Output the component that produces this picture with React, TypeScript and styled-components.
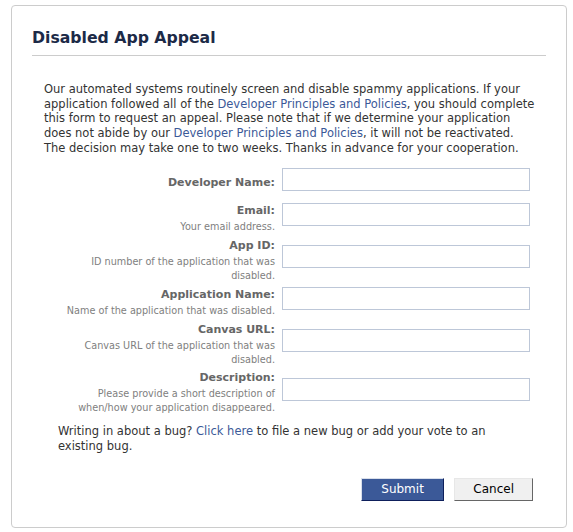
import React from "react";
import styled, { createGlobalStyle } from "styled-components";

const Global = createGlobalStyle`
  html, body { margin: 0; padding: 0; background: #fff; }
  body { font-family: "DejaVu Sans", Verdana, sans-serif; font-size: 11px; color: #333; }
  * { box-sizing: border-box; }
`;

const Card = styled.div`
  margin: 5px 6px 5px 11px;
  border: 1px solid #ccc;
  border-radius: 4px;
  padding: 22px 20px 26px;
  background: #fff;
`;

const Title = styled.h2`
  margin: 0;
  padding: 0 0 7px;
  font-size: 15.7px;
  line-height: 20px;
  font-weight: bold;
  color: #1c2a47;
  border-bottom: 1px solid #ccc;
`;

const Intro = styled.p`
  margin: 26px 0 0;
  padding: 0 10px 0 12px;
  font-size: 11.5px;
  line-height: 14.74px;
  color: #333;
`;

const Link = styled.a`
  color: #3b5998;
  text-decoration: none;
  cursor: pointer;
`;

const Form = styled.div`
  margin-top: 12px;
  padding-left: 26px;
  display: grid;
  grid-template-columns: 217px 248px;
  column-gap: 7px;
  row-gap: 4.5px;
`;

const LabelCell = styled.div`
  align-self: center;
  text-align: right;
`;

const Label = styled.label`
  display: block;
  font-weight: bold;
  font-size: 11px;
  line-height: 14px;
  color: #666;
`;

const Sub = styled.div`
  margin-top: 2px;
  font-size: 9.7px;
  line-height: 14px;
  color: #808080;
`;

const Input = styled.input`
  align-self: center;
  width: 248px;
  height: 23px;
  margin: 0 0 8px;
  border: 1px solid #bdc7d8;
  padding: 3px;
  font-family: inherit;
  font-size: 11px;
  outline: none;
`;

const Bug = styled.p`
  margin: 9px 0 0;
  padding: 0 40px 0 26px;
  font-size: 11.5px;
  line-height: 14.74px;
  color: #333;
`;

const Actions = styled.div`
  margin-top: 24px;
  padding-right: 13px;
  display: flex;
  justify-content: flex-end;
  gap: 10px;
`;

const Button = styled.button<{ $primary?: boolean }>`
  height: 23px;
  padding: 0 ${(p) => (p.$primary ? "19.5px" : "18px")};
  font-family: "DejaVu Sans", Verdana, sans-serif;
  font-size: 12px;
  line-height: 14px;
  border-style: solid;
  border-width: 1px;
  background: ${(p) => (p.$primary ? "#3b5998" : "#f0f0f0")};
  color: ${(p) => (p.$primary ? "#fff" : "#000")};
  border-color: ${(p) =>
    p.$primary ? "#d9dfea #0e1f5b #0e1f5b #d9dfea" : "#e7e7e7 #666 #666 #e7e7e7"};
  cursor: pointer;
`;

type Field = { label: string; sub?: string };

const fields: Field[] = [
  { label: "Developer Name:" },
  { label: "Email:", sub: "Your email address." },
  { label: "App ID:", sub: "ID number of the application that was disabled." },
  { label: "Application Name:", sub: "Name of the application that was disabled." },
  { label: "Canvas URL:", sub: "Canvas URL of the application that was disabled." },
  { label: "Description:", sub: "Please provide a short description of when/how your application disappeared." },
];

export default function App() {
  return (
    <>
      <Global />
      <Card>
        <Title>Disabled App Appeal</Title>
        <Intro>
          Our automated systems routinely screen and disable spammy applications. If your
          application followed all of the <Link>Developer Principles and Policies</Link>, you
          should complete this form to request an appeal. Please note that if we determine
          your application does not abide by our <Link>Developer Principles and Policies</Link>,
          it will not be reactivated. The decision may take one to two weeks. Thanks in advance
          for your cooperation.
        </Intro>
        <Form>
          {fields.map((f) => (
            <React.Fragment key={f.label}>
              <LabelCell>
                <Label>{f.label}</Label>
                {f.sub && <Sub>{f.sub}</Sub>}
              </LabelCell>
              <Input type="text" />
            </React.Fragment>
          ))}
        </Form>
        <Bug>
          Writing in about a bug? <Link>Click here</Link> to file a new bug or add your vote to
          an existing bug.
        </Bug>
        <Actions>
          <Button $primary>Submit</Button>
          <Button>Cancel</Button>
        </Actions>
      </Card>
    </>
  );
}
